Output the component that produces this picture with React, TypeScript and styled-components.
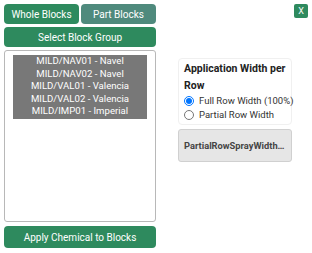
import * as React from "react";
import styled, { createGlobalStyle } from "styled-components";

const GlobalStyle = createGlobalStyle`
  body {
    margin: 0;
    background: #ffffff;
    font-family: Roboto, "Open Sans", sans-serif;
  }
`;

const blocks = [
  "MILD/NAV01 - Navel",
  "MILD/NAV02 - Navel",
  "MILD/VAL01 - Valencia",
  "MILD/VAL02 - Valencia",
  "MILD/IMP01 - Imperial",
];

export default function App() {
  const [width, setWidth] = React.useState("full");
  return (
    <>
      <GlobalStyle />
      <Page>
        <LeftColumn>
          <TabRow>
            <GreenButton>Whole Blocks</GreenButton>
            <GreenButton muted>Part Blocks</GreenButton>
          </TabRow>
          <GreenButton>Select Block Group</GreenButton>
          <ListBox>
            <Selected>
              {blocks.map((b) => (
                <Item key={b}>{b}</Item>
              ))}
            </Selected>
          </ListBox>
          <GreenButton tall>Apply Chemical to Blocks</GreenButton>
        </LeftColumn>
        <RightColumn>
          <CloseButton>X</CloseButton>
          <Panel>
            <PanelTitle>Application Width per Row</PanelTitle>
            <RadioLabel>
              <input
                type="radio"
                checked={width === "full"}
                onChange={() => setWidth("full")}
              />
              Full Row Width (100%)
            </RadioLabel>
            <RadioLabel>
              <input
                type="radio"
                checked={width === "partial"}
                onChange={() => setWidth("partial")}
              />
              Partial Row Width
            </RadioLabel>
          </Panel>
          <GreyButton>PartialRowSprayWidthButton</GreyButton>
        </RightColumn>
      </Page>
    </>
  );
}

const Page = styled.div`
  display: flex;
  padding: 4px;
  gap: 22px;
`;

const LeftColumn = styled.div`
  width: 152px;
  display: flex;
  flex-direction: column;
  gap: 3px;
`;

const TabRow = styled.div`
  display: flex;
  gap: 2px;
  & > button {
    flex: 1;
  }
`;

const GreenButton = styled.button<{ muted?: boolean; tall?: boolean }>`
  height: ${(p) => (p.tall ? "22px" : "20px")};
  margin-top: ${(p) => (p.tall ? "1px" : "0")};
  border: none;
  border-radius: 4px;
  background: ${(p) => (p.muted ? "#4f8a7d" : "#2e8a5e")};
  color: #ffffff;
  font-family: inherit;
  font-size: 10px;
  padding: 0;
  cursor: pointer;
`;

const ListBox = styled.div`
  height: 172px;
  box-sizing: border-box;
  border: 1px solid #b8b8b8;
  border-radius: 3px;
  padding: 4px 8px;
`;

const Selected = styled.div`
  background: #787878;
  padding: 0 0 1px;
`;

const Item = styled.div`
  color: #ffffff;
  font-size: 9.6px;
  line-height: 12.5px;
  text-align: center;
`;

const RightColumn = styled.div`
  width: 130px;
  display: flex;
  flex-direction: column;
  align-items: flex-start;
`;

const CloseButton = styled.button`
  align-self: flex-end;
  width: 14px;
  height: 14px;
  padding: 0;
  border: none;
  border-radius: 2px;
  background: #2e8a5e;
  color: #ffffff;
  font-family: inherit;
  font-size: 9px;
  line-height: 14px;
`;

const Panel = styled.div`
  margin-top: 40px;
  width: 114px;
  box-sizing: border-box;
  border: 1px solid #f0f0f0;
  border-radius: 4px;
  padding: 1px 4px 2px 5px;
`;

const PanelTitle = styled.div`
  font-weight: bold;
  font-size: 10.5px;
  line-height: 17px;
  color: #222;
`;

const RadioLabel = styled.label`
  display: flex;
  align-items: center;
  gap: 5px;
  font-size: 9.5px;
  line-height: 14px;
  color: #333;
  white-space: nowrap;
  input {
    margin: 0;
    width: 10px;
    height: 10px;
  }
`;

const GreyButton = styled.button`
  margin-top: 4px;
  width: 114px;
  height: 33px;
  border: 1px solid #d0d0d0;
  border-radius: 3px;
  background: #e6e6e6;
  color: #444;
  font-family: inherit;
  font-weight: bold;
  font-size: 9.3px;
  padding: 0 5px;
  white-space: nowrap;
  overflow: hidden;
  text-overflow: ellipsis;
`;
